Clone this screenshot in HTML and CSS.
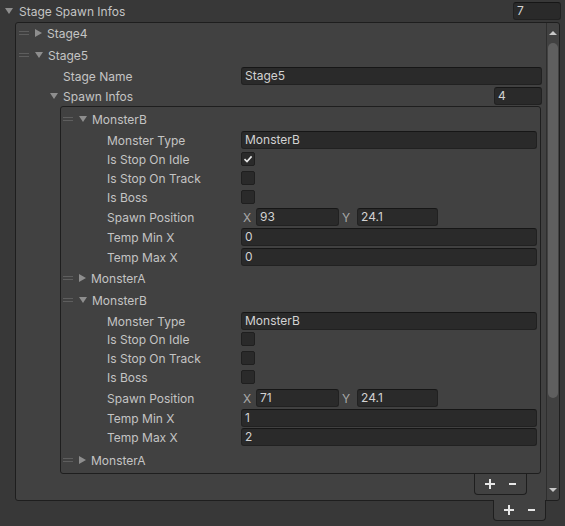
FILE: index.html
```html
<!DOCTYPE html>
<html lang="en">
<head>
  <meta charset="UTF-8">
  <title>Stage Spawn Infos</title>
  <link rel="stylesheet" href="styles.css">
</head>
<body>
  <div class="prop-header">
    <span class="arrow down"></span>
    <span class="label">Stage Spawn Infos</span>
    <div class="field size-field">7</div>
  </div>

  <div class="list outer">
    <div class="list-body">
      <div class="row elem gap-1"><span class="handle"></span><span class="arrow right"></span><span>Stage4</span></div>
      <div class="row elem gap-4"><span class="handle"></span><span class="arrow down"></span><span>Stage5</span></div>
      <div class="row prop gap-3"><span class="label">Stage Name</span><div class="field">Stage5</div></div>
      <div class="row sub-list gap-2">
        <span class="arrow down"></span>
        <span class="label">Spawn Infos</span>
        <div class="field size-field">4</div>
      </div>

      <div class="list inner gap-1">
        <div class="row elem gap-3"><span class="handle"></span><span class="arrow down"></span><span>MonsterB</span></div>
        <div class="row prop gap-3"><span class="label">Monster Type</span><div class="field">MonsterB</div></div>
        <div class="row prop gap-1"><span class="label">Is Stop On Idle</span>
          <span class="checkbox">
            <svg width="10" height="10" viewBox="0 0 10 10"><polyline points="1.5,5.2 4,7.6 8.6,2.4" fill="none" stroke="#e8e8e8" stroke-width="1.6"/></svg>
          </span>
        </div>
        <div class="row prop gap-1"><span class="label">Is Stop On Track</span><span class="checkbox"></span></div>
        <div class="row prop gap-1"><span class="label">Is Boss</span><span class="checkbox"></span></div>
        <div class="row prop gap-2"><span class="label">Spawn Position</span>
          <div class="vector">
            <span class="axis">X</span><div class="field vx">93</div>
            <span class="axis ay">Y</span><div class="field vy">24.1</div>
          </div>
        </div>
        <div class="row prop gap-2"><span class="label">Temp Min X</span><div class="field">0</div></div>
        <div class="row prop gap-2"><span class="label">Temp Max X</span><div class="field">0</div></div>
        <div class="row elem gap-3"><span class="handle"></span><span class="arrow right"></span><span>MonsterA</span></div>

        <div class="row elem gap-4"><span class="handle"></span><span class="arrow down"></span><span>MonsterB</span></div>
        <div class="row prop gap-3"><span class="label">Monster Type</span><div class="field">MonsterB</div></div>
        <div class="row prop"><span class="label">Is Stop On Idle</span><span class="checkbox"></span></div>
        <div class="row prop gap-1"><span class="label">Is Stop On Track</span><span class="checkbox"></span></div>
        <div class="row prop gap-1"><span class="label">Is Boss</span><span class="checkbox"></span></div>
        <div class="row prop gap-3"><span class="label">Spawn Position</span>
          <div class="vector">
            <span class="axis">X</span><div class="field vx">71</div>
            <span class="axis ay">Y</span><div class="field vy">24.1</div>
          </div>
        </div>
        <div class="row prop gap-2"><span class="label">Temp Min X</span><div class="field">1</div></div>
        <div class="row prop gap-1"><span class="label">Temp Max X</span><div class="field">2</div></div>
        <div class="row elem gap-5"><span class="handle"></span><span class="arrow right"></span><span>MonsterA</span></div>
      </div>

      <div class="footer inner-footer">
        <span class="btn"><svg width="10" height="10" viewBox="0 0 10 10"><rect x="4" y="0" width="2" height="10" fill="#e6e6e6"/><rect x="0" y="4" width="10" height="2" fill="#e6e6e6"/></svg></span>
        <span class="btn"><svg width="7" height="2" viewBox="0 0 7 2"><rect width="7" height="2" fill="#e6e6e6"/></svg></span>
      </div>
    </div>

    <div class="scrollbar">
      <div class="scroll-btn"><span class="tri up"></span></div>
      <div class="thumb"></div>
      <div class="track-rest"></div>
      <div class="scroll-btn"><span class="tri down-tri"></span></div>
    </div>
  </div>

  <div class="footer outer-footer">
    <span class="btn"><svg width="10" height="10" viewBox="0 0 10 10"><rect x="4" y="0" width="2" height="10" fill="#e6e6e6"/><rect x="0" y="4" width="10" height="2" fill="#e6e6e6"/></svg></span>
    <span class="btn"><svg width="7" height="2" viewBox="0 0 7 2"><rect width="7" height="2" fill="#e6e6e6"/></svg></span>
  </div>
</body>
</html>
```

FILE: styles.css
```css
* {
  margin: 0;
  padding: 0;
  box-sizing: border-box;
}

body {
  width: 565px;
  height: 526px;
  overflow: hidden;
  background: #383838;
  color: #c4c4c4;
  font-family: "Inter", "Noto Sans", sans-serif;
  font-size: 12px;
}

/* top property row */
.prop-header {
  height: 22px;
  display: flex;
  align-items: center;
  padding-left: 5px;
  padding-right: 4px;
}

.prop-header .arrow {
  margin-right: 6px;
}

.prop-header .label {
  flex: 1;
}

/* foldout arrows */
.arrow {
  display: inline-block;
  flex: none;
  width: 0;
  height: 0;
}

.arrow.down {
  border-left: 4px solid transparent;
  border-right: 4px solid transparent;
  border-top: 6px solid #8e8e8e;
}

.arrow.right {
  border-top: 4px solid transparent;
  border-bottom: 4px solid transparent;
  border-left: 7px solid #8e8e8e;
  margin-right: 1px;
}

.handle {
  display: inline-block;
  flex: none;
  width: 10px;
  height: 4px;
  border-top: 1px solid #5e5e5e;
  border-bottom: 1px solid #5e5e5e;
  margin-right: 6px;
}

/* fields */
.field {
  flex: 1;
  height: 18px;
  line-height: 16px;
  padding: 0 3px;
  background: #2a2a2a;
  border: 1px solid #212121;
  border-top-color: #161616;
  border-radius: 3px;
  color: #d2d2d2;
  white-space: nowrap;
}

.size-field {
  flex: none;
  width: 48px;
  height: 18px;
}

.checkbox {
  width: 14px;
  height: 14px;
  background: #2a2a2a;
  border: 1px solid #1f1f1f;
  border-radius: 2px;
  display: flex;
  align-items: center;
  justify-content: center;
}

/* reorderable lists */
.list {
  background: #414141;
  border: 1px solid #1e1e1e;
}

.list.outer {
  margin-left: 15px;
  width: 545px;
  height: 479px;
  border-radius: 3px;
  display: flex;
}

.list-body {
  flex: 1;
  padding-right: 4px;
  display: flex;
  flex-direction: column;
}

.list.inner {
  margin-left: 44px;
  margin-right: 1px;
  padding-right: 3px;
  padding-bottom: 4px;
  border-radius: 3px;
}

.row {
  height: 18px;
  display: flex;
  align-items: center;
  white-space: nowrap;
}

.gap-1 { margin-top: 1px; }
.gap-2 { margin-top: 2px; }
.gap-3 { margin-top: 3px; }
.gap-4 { margin-top: 4px; }
.gap-5 { margin-top: 5px; }

.list-body > .elem {
  padding-left: 3px;
}

.list-body > .elem .arrow {
  margin-right: 5px;
}

.list-body > .prop {
  padding-left: 47px;
}

.list-body > .prop .label {
  width: 178px;
}

.sub-list {
  padding-left: 34px;
}

.sub-list .arrow {
  margin-right: 5px;
}

.sub-list .label {
  flex: 1;
}

.inner .elem {
  padding-left: 2px;
}

.inner .elem .arrow {
  margin-right: 5px;
}

.inner .prop {
  padding-left: 46px;
}

.inner .prop .label {
  width: 134px;
  flex: none;
}

/* vector2 field */
.vector {
  flex: 1;
  display: flex;
  align-items: center;
}

.axis {
  width: 15px;
  padding-left: 2px;
  color: #a8a8a8;
}

.axis.ay {
  width: 18px;
  padding-left: 3px;
}

.vector .vx {
  flex: none;
  width: 83px;
}

.vector .vy {
  flex: none;
  width: 81px;
}

/* footers with + and - */
.footer {
  width: 53px;
  height: 21px;
  background: #414141;
  border: 1px solid #1e1e1e;
  border-top: none;
  border-radius: 0 0 4px 4px;
  display: flex;
  align-items: center;
  padding-left: 4px;
}

.footer .btn {
  width: 22px;
  height: 20px;
  display: flex;
  align-items: center;
  justify-content: center;
}

.inner-footer {
  align-self: flex-end;
  margin-right: 15px;
}

.outer-footer {
  margin-left: 493px;
  margin-top: -1px;
}

/* scrollbar */
.scrollbar {
  width: 13px;
  border-left: 1px solid #2e2e2e;
  display: flex;
  flex-direction: column;
}

.scroll-btn {
  height: 20px;
  display: flex;
  align-items: center;
  justify-content: center;
}

.tri {
  width: 0;
  height: 0;
  border-left: 4px solid transparent;
  border-right: 4px solid transparent;
}

.tri.up {
  border-bottom: 4px solid #c8c8c8;
}

.tri.down-tri {
  border-top: 4px solid #c8c8c8;
}

.thumb {
  height: 355px;
  margin: 0 1px;
  background: #5f5f5f;
  border-radius: 5px;
}

.track-rest {
  flex: 1;
}
```
